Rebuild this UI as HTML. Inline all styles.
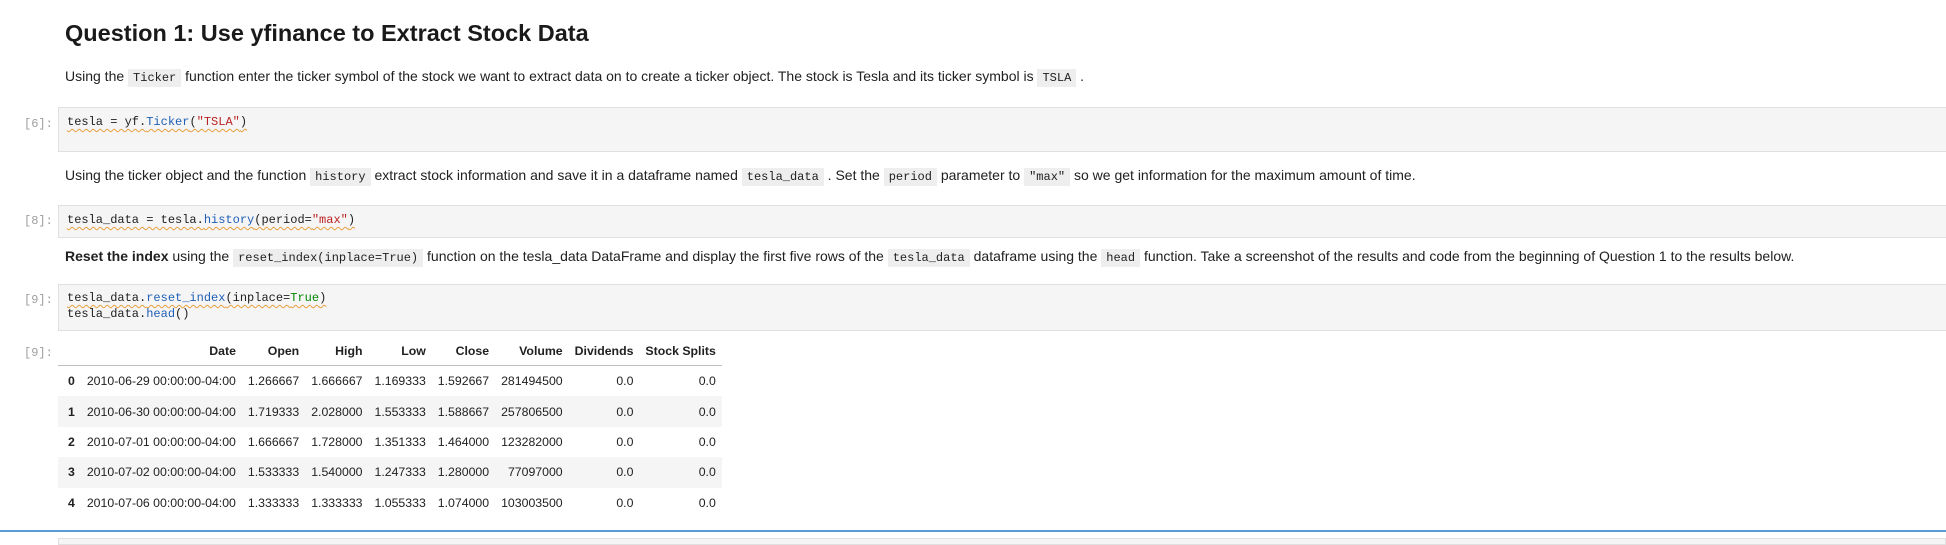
<!DOCTYPE html>
<html><head><meta charset="utf-8"><style>
body{margin:0;width:1946px;height:541px;background:#fff;position:relative;overflow:hidden;font-family:"Liberation Sans",sans-serif;color:#212121}
.a{position:absolute;white-space:nowrap}
h1{position:absolute;left:65px;top:20px;margin:0;font-size:23.5px;font-weight:bold;color:#1a1a1a}
.t{font-size:14px;line-height:20px}
.c{background:#eee;font-family:"Liberation Mono",monospace;font-size:12px;padding:2px 5px}
.cell{position:absolute;left:58px;right:0;background:#f5f5f5;border:1px solid #e0e0e0;border-right:none}
.code{font-family:"Liberation Mono",monospace;font-size:12px;line-height:16px;padding:6px 8px;color:#212121;text-decoration:underline wavy #e8a040;text-decoration-thickness:1px;text-underline-offset:3px}
.p{font-family:"Liberation Mono",monospace;font-size:12px;color:#9e9e9e;position:absolute;left:24px}
table{position:absolute;left:58px;top:337px;border-collapse:collapse;font-size:12.3px;white-space:nowrap}
th{font-weight:bold;text-align:right;padding:0 6px;height:28px;border-bottom:1px solid #bdbdbd}
td{text-align:right;padding:0 6px;height:30.4px}
tbody tr:nth-child(odd){background:#fff}
tbody tr:nth-child(even){background:#f5f5f5}
td:first-child{font-weight:bold;text-align:left;padding-left:10px}
.k{color:#1f5fb5}.s{color:#b22}.g{color:#080}
</style></head><body>
<h1>Question 1: Use yfinance to Extract Stock Data</h1>
<div class="a t" style="left:65px;top:66px">Using the <span class="c">Ticker</span> function enter the ticker symbol of the stock we want to extract data on to create a ticker object. The stock is Tesla and its ticker symbol is <span class="c">TSLA</span> .</div>
<div class="p" style="top:117px">[6]:</div>
<div class="cell" style="top:107px;height:43px"><div class="code"><span>tesla = yf.<span class="k">Ticker</span>(<span class="s">"TSLA"</span>)</span></div></div>
<div class="a t" style="left:65px;top:165px">Using the ticker object and the function <span class="c">history</span> extract stock information and save it in a dataframe named <span class="c">tesla_data</span> . Set the <span class="c">period</span> parameter to <span class="c">"max"</span> so we get information for the maximum amount of time.</div>
<div class="p" style="top:214px">[8]:</div>
<div class="cell" style="top:205px;height:31px"><div class="code">tesla_data = tesla.<span class="k">history</span>(period=<span class="s">"max"</span>)</div></div>
<div class="a t" style="left:65px;top:246px"><b>Reset the index</b> using the <span class="c">reset_index(inplace=True)</span> function on the tesla_data DataFrame and display the first five rows of the <span class="c">tesla_data</span> dataframe using the <span class="c">head</span> function. Take a screenshot of the results and code from the beginning of Question 1 to the results below.</div>
<div class="p" style="top:293px">[9]:</div>
<div class="cell" style="top:284px;height:45px"><div class="code" style="padding-top:5px">tesla_data.<span class="k">reset_index</span>(inplace=<span class="g">True</span>)<br><span style="text-decoration:none;display:inline-block">tesla_data.<span class="k">head</span>()</span></div></div>
<div class="p" style="top:346px">[9]:</div>
<table>
<thead><tr><th></th><th>Date</th><th>Open</th><th>High</th><th>Low</th><th>Close</th><th>Volume</th><th>Dividends</th><th>Stock Splits</th></tr></thead>
<tbody>
<tr><td>0</td><td>2010-06-29 00:00:00-04:00</td><td>1.266667</td><td>1.666667</td><td>1.169333</td><td>1.592667</td><td>281494500</td><td>0.0</td><td>0.0</td></tr>
<tr><td>1</td><td>2010-06-30 00:00:00-04:00</td><td>1.719333</td><td>2.028000</td><td>1.553333</td><td>1.588667</td><td>257806500</td><td>0.0</td><td>0.0</td></tr>
<tr><td>2</td><td>2010-07-01 00:00:00-04:00</td><td>1.666667</td><td>1.728000</td><td>1.351333</td><td>1.464000</td><td>123282000</td><td>0.0</td><td>0.0</td></tr>
<tr><td>3</td><td>2010-07-02 00:00:00-04:00</td><td>1.533333</td><td>1.540000</td><td>1.247333</td><td>1.280000</td><td>77097000</td><td>0.0</td><td>0.0</td></tr>
<tr><td>4</td><td>2010-07-06 00:00:00-04:00</td><td>1.333333</td><td>1.333333</td><td>1.055333</td><td>1.074000</td><td>103003500</td><td>0.0</td><td>0.0</td></tr>
</tbody></table>
<div class="a" style="left:0;right:0;top:530px;height:2px;background:#5b9bd5"></div>
<div class="a" style="left:58px;right:0;top:538px;height:5px;border:1px solid #e0e0e0;background:#f5f5f5"></div>
</body></html>
